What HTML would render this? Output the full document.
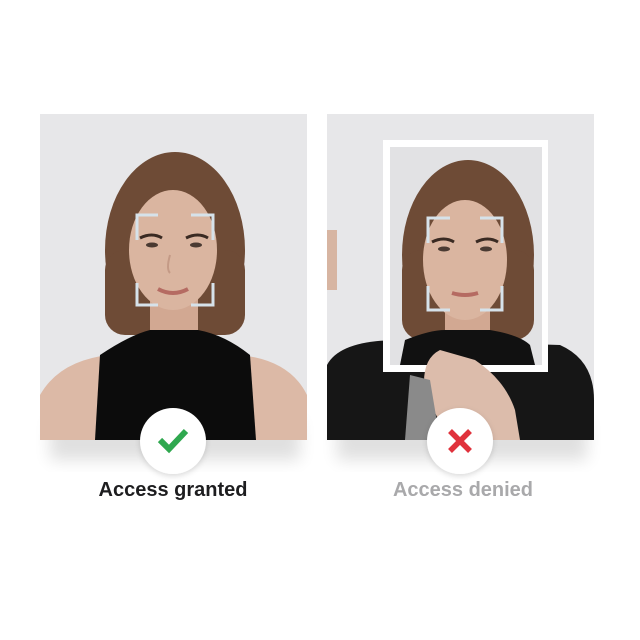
<!DOCTYPE html>
<html><head><style>
body{margin:0;width:640px;height:640px;background:#fff;position:relative;overflow:hidden;font-family:"Liberation Sans",sans-serif}
.lbl{position:absolute;top:479px;font-weight:bold;font-size:20px;width:240px;text-align:center}
</style></head><body>
<svg width="640" height="640" style="position:absolute;left:0;top:0">
<defs>
<filter id="sh" x="-30%" y="-30%" width="160%" height="160%"><feGaussianBlur stdDeviation="8"/></filter>
<filter id="cs" x="-50%" y="-50%" width="200%" height="200%"><feDropShadow dx="0" dy="2" stdDeviation="3" flood-opacity="0.15"/></filter>
<clipPath id="cl"><rect x="40" y="114" width="267" height="326"/></clipPath>
<clipPath id="cr"><rect x="327" y="114" width="267" height="326"/></clipPath>
<clipPath id="cp"><rect x="390" y="147" width="152" height="218"/></clipPath>
</defs>
<rect x="50" y="420" width="250" height="40" fill="#000" opacity="0.12" filter="url(#sh)"/>
<rect x="337" y="420" width="250" height="40" fill="#000" opacity="0.12" filter="url(#sh)"/>
<g clip-path="url(#cl)">
<rect x="40" y="114" width="267" height="326" fill="#e7e7e9"/>
<ellipse cx="175" cy="250" rx="70" ry="98" fill="#6e4b36"/>
<rect x="105" y="250" width="140" height="85" rx="20" fill="#6e4b36"/>
<rect x="150" y="290" width="48" height="60" fill="#d2a892"/>
<path d="M40 440 L40 395 Q60 360 110 355 L240 355 Q290 360 307 395 L307 440Z" fill="#dcb9a6"/>
<path d="M95 440 L100 355 Q130 335 150 330 L198 330 Q225 335 250 355 L256 440Z" fill="#0c0c0c"/>
<ellipse cx="173" cy="250" rx="44" ry="60" fill="#dab5a0"/>
<path d="M140 238 q12 -6 22 0 M186 238 q12 -6 22 0" stroke="#3a2a22" stroke-width="3" fill="none"/>
<ellipse cx="152" cy="245" rx="6" ry="2.5" fill="#4a3a32"/><ellipse cx="196" cy="245" rx="6" ry="2.5" fill="#4a3a32"/>
<path d="M170 255 q-4 14 0 18" stroke="#c49a86" stroke-width="2" fill="none"/>
<path d="M158 289 q15 8 30 0" stroke="#b56b62" stroke-width="4" fill="none"/>
<g stroke="#d6e2ea" stroke-width="3" fill="none">
<path d="M137 240 V215 H158 M191 215 H213 V240 M137 283 V305 H158 M191 305 H213 V283"/>
</g>
</g>
<g clip-path="url(#cr)">
<rect x="327" y="114" width="267" height="326" fill="#e7e7e9"/>
<path d="M327 365 Q340 340 400 340 L560 345 Q594 360 594 400 L594 440 L327 440Z" fill="#161616"/>
<rect x="327" y="230" width="10" height="60" fill="#d7b5a2"/>
<rect x="383" y="140" width="165" height="232" fill="#fff"/>
<g clip-path="url(#cp)">
<rect x="390" y="147" width="152" height="218" fill="#e2e2e4"/>
<ellipse cx="468" cy="255" rx="66" ry="95" fill="#6e4b36"/>
<rect x="402" y="250" width="132" height="90" rx="20" fill="#6e4b36"/>
<rect x="445" y="295" width="45" height="50" fill="#d2a892"/>
<path d="M400 365 L405 340 Q430 330 445 330 L490 330 Q520 335 530 345 L535 365Z" fill="#111"/>
<ellipse cx="465" cy="260" rx="42" ry="60" fill="#dab5a0"/>
<path d="M432 242 q12 -6 22 0 M476 242 q12 -6 22 0" stroke="#3a2a22" stroke-width="3" fill="none"/>
<ellipse cx="444" cy="249" rx="6" ry="2.5" fill="#4a3a32"/><ellipse cx="486" cy="249" rx="6" ry="2.5" fill="#4a3a32"/>
<path d="M452 293 q13 4 26 0" stroke="#b56b62" stroke-width="4" fill="none"/>
<g stroke="#d6e2ea" stroke-width="3" fill="none">
<path d="M428 243 V218 H450 M480 218 H502 V243 M428 286 V310 H450 M480 310 H502 V286"/>
</g>
</g>
<path d="M425 395 Q420 360 440 350 L475 360 Q505 380 515 410 L520 440 L450 440Z" fill="#dcbcab"/>
<path d="M410 375 L430 380 L440 440 L405 440Z" fill="#8a8a8a"/>
</g>
<circle cx="173" cy="441" r="33" fill="#fff" filter="url(#cs)"/>
<path d="M160 440 L169 449 L186 431" stroke="#2fa84f" stroke-width="6" fill="none"/>
<circle cx="460" cy="441" r="33" fill="#fff" filter="url(#cs)"/>
<path d="M450 431 L470 451 M470 431 L450 451" stroke="#e0323c" stroke-width="5.5" fill="none"/>
</svg>
<div class="lbl" style="left:53px;color:#1d1d1f">Access granted</div>
<div class="lbl" style="left:343px;color:#a9a9ab">Access denied</div>
</body></html>
